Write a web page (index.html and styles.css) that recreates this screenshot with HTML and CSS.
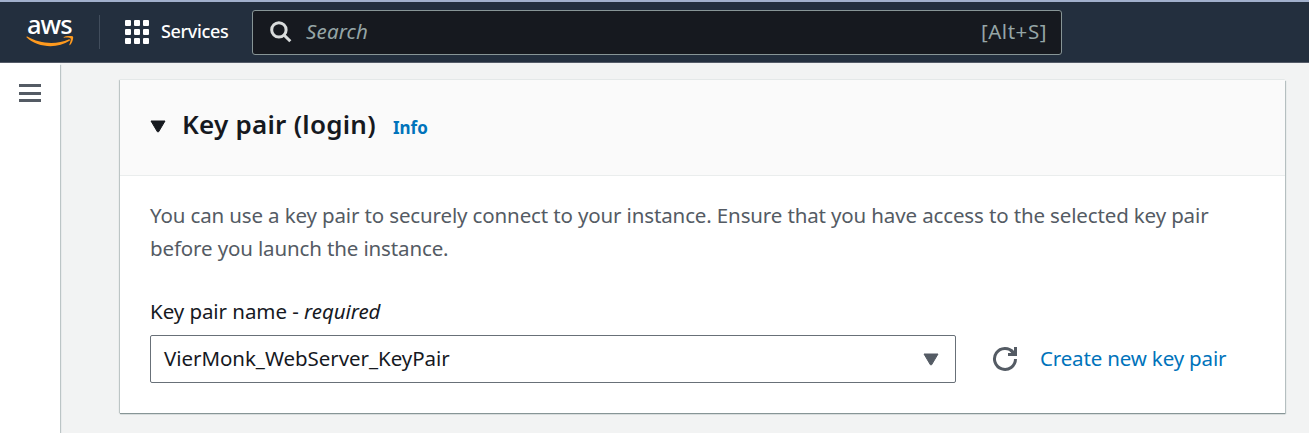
FILE: index.html
```
<!DOCTYPE html>
<html lang="en">
<head>
<meta charset="utf-8">
<title>Key pair (login)</title>
<link rel="stylesheet" href="styles.css">
</head>
<body>
<header class="topbar">
  <div class="logo">
    <span class="logo-text">aws</span>
    <svg class="logo-smile" width="48" height="12" viewBox="0 0 48 12" fill="#ff9a1e">
      <path d="M.5 1.3C.1.8.7.2 1.3.6C14 8.300 31 8.700 42.600 3.500C43.700 3 44.500 4 43.500 4.800C32 12.700 12 12.300.5 1.300Z"/>
      <path d="M38 1.800C37.500 1.800 37.400 1.300 38 1C40.500-.3 46-.5 46.900.6C47.800 2 46.300 7.300 44.100 9C43.600 9.400 43.100 9.100 43.400 8.500C44 7 45.200 3.600 44.600 2.500C43.900 1.400 40 1.500 38 1.800Z"/>
    </svg>
  </div>
  <div class="divider"></div>
  <nav class="services">
    <svg width="24" height="24" viewBox="0 0 24 24" fill="#fff">
      <rect width="6" height="6" rx="1"/><rect x="9" width="6" height="6" rx="1"/><rect x="18" width="6" height="6" rx="1"/>
      <rect y="9" width="6" height="6" rx="1"/><rect x="9" y="9" width="6" height="6" rx="1"/><rect x="18" y="9" width="6" height="6" rx="1"/>
      <rect y="18" width="6" height="6" rx="1"/><rect x="9" y="18" width="6" height="6" rx="1"/><rect x="18" y="18" width="6" height="6" rx="1"/>
    </svg>
    <span class="services-label">Services</span>
  </nav>
  <div class="search">
    <svg width="22" height="22" viewBox="0 0 22 22" fill="none" stroke="#d9dcdc" stroke-width="3">
      <circle cx="8.900" cy="8.900" r="7.200"/><path d="M14 14L20.300 20.300"/>
    </svg>
    <span class="search-hint">Search</span>
    <span class="search-key">[Alt+S]</span>
  </div>
</header>
<div class="page">
  <aside class="side">
    <div class="menu"><i></i><i></i><i></i></div>
  </aside>
  <main class="content">
    <section class="card">
      <div class="card-head">
        <svg class="caret" width="16" height="13" viewBox="0 0 16 13" fill="#16191f" stroke="#16191f" stroke-linejoin="round"><path d="M1 1H15L8.600 11.800H7.400Z"/></svg>
        <h2 class="title">Key pair (login)</h2>
        <a class="info">Info</a>
      </div>
      <div class="card-body">
        <p class="desc"><span>You can use a key pair to securely connect to your instance. Ensure that you have access to the selected key pair</span><br><span>before you launch the instance.</span></p>
        <div class="label"><span>Key pair name - </span><em>required</em></div>
        <div class="row">
          <div class="select">
            <span class="value">VierMonk_WebServer_KeyPair</span>
            <svg width="16" height="13" viewBox="0 0 16 13" fill="#545b64" stroke="#545b64" stroke-linejoin="round"><path d="M1 1H15L8.600 11.800H7.400Z"/></svg>
          </div>
          <svg class="refresh" width="26" height="26" viewBox="0 0 26 26" fill="none" stroke="#545b64" stroke-width="3">
            <path d="M23.500 13A10.500 10.500 0 1 1 21.300 6.500"/><path d="M16 8.400H23.500V1"/><path d="M18.500 4L23 8.500"/>
          </svg>
          <a class="create">Create new key pair</a>
        </div>
      </div>
    </section>
  </main>
</div>
</body>
</html>
```
FILE: styles.css
```
* { box-sizing: border-box; }
body {
  margin: 0;
  height: 433px;
  display: flex;
  flex-direction: column;
  overflow: hidden;
  background: #f2f3f3;
  color: #16191f;
  font: 20.500px/33px "Noto Sans", sans-serif;
}
svg { display: block; flex: none; }
span, a, h2 { white-space: pre; }
.topbar {
  height: 63px;
  flex: none;
  display: flex;
  align-items: center;
  padding-left: 26px;
  border-top: 2px solid #a1b0cc;
  border-bottom: 1px solid #545b68;
  background: #232f3e;
  color: #fff;
}
.logo { width: 48px; height: 30px; margin-top: -1px; }
.logo-text {
  display: block;
  height: 19px;
  padding-left: 1px;
  font-size: 25.500px;
  line-height: 15px;
  font-weight: 500;
  letter-spacing: -1px;
}
.divider { width: 1px; height: 34px; margin-left: 25px; background: #414d5c; }
.services { display: flex; align-items: center; margin-left: 25px; width: 127px; }
.services-label { margin: -1px 0 0 12px; font-size: 18px; font-weight: 500; letter-spacing: -.35px; }
.search {
  width: 810px;
  height: 45px;
  display: flex;
  align-items: center;
  padding: 0 14px 0 17px;
  border: 1px solid #879596;
  border-radius: 3px;
  background: #16191f;
  color: #95a5a6;
}
.search-hint { margin: -2px 0 0 14px; font-style: italic; letter-spacing: .15px; }
.search-key { margin: -2px 0 0 auto; letter-spacing: .55px; }
.page { flex: 1; display: flex; }
.side {
  width: 60px;
  padding: 21px 19px;
  background: #fff;
  box-shadow: 1px 2px 1px #bcc5c6;
}
.menu { display: flex; flex-direction: column; gap: 4.500px; }
.menu i { height: 3px; width: 22px; background: #545b64; }
.content { flex: 1; padding: 17px 24px 20px 60px; }
.card {
  height: 333px;
  background: #fff;
  box-shadow: 0 1px 1px #879596, 1px 1px 1px #bfc8c9, -1px 0 1px #c8cfcf, 0 -1px 0 #eaeded;
}
.card-head {
  height: 96px;
  display: flex;
  align-items: center;
  padding: 0 30px 6px;
  border-bottom: 1px solid #eaeded;
  background: #fafafa;
}
.caret { margin-top: 3px; }
.title { margin: 0 0 0 16px; font-size: 26px; font-weight: 600; letter-spacing: .25px; }
.info { margin: 5px 0 0 17px; font-size: 17px; font-weight: 700; color: #0073bb; }
.card-body { padding: 23px 30px; }
.desc { margin: 0; color: #545b64; letter-spacing: -.135px; }
.label { margin-top: 30px; letter-spacing: -.06px; }
.row { display: flex; align-items: center; margin-top: 7px; }
.select {
  width: 806px;
  height: 48px;
  display: flex;
  align-items: center;
  justify-content: space-between;
  padding: 0 16px 0 13px;
  border: 1px solid #687078;
  border-radius: 2px;
}
.value { margin-top: -2px; letter-spacing: -.05px; }
.refresh { margin-left: 36px; }
.create { margin: -2px 0 0 22px; color: #0073bb; letter-spacing: -.16px; }
```
